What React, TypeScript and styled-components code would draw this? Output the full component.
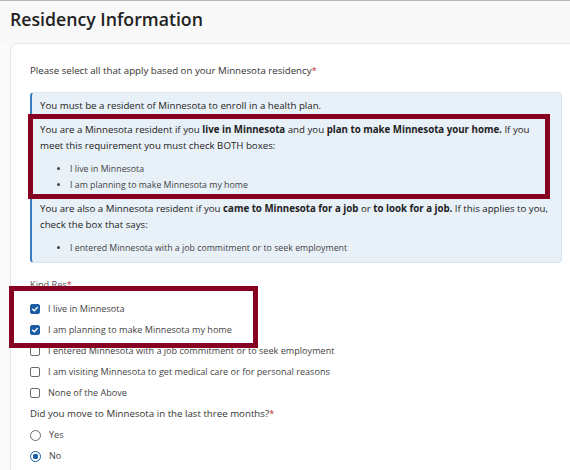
import React from 'react';
import styled, {createGlobalStyle} from 'styled-components';

const GlobalStyle = createGlobalStyle`
  html, body {
    margin: 0;
    background: #fafafa;
    font-family: "Open Sans", "Liberation Sans", sans-serif;
    color: #333;
    overflow: hidden;
  }
`

const kindOptions = [
    {text: 'I live in Minnesota', checked: true},
    {text: 'I am planning to make Minnesota my home', checked: true},
    {text: 'I entered Minnesota with a job commitment or to seek employment', checked: false},
    {text: 'I am visiting Minnesota to get medical care or for personal reasons', checked: false},
    {text: 'None of the Above', checked: false}
]

const CheckRow = ({text, checked}: {text: string, checked: boolean}) => (
    <OptionRow>
        <Checkbox $checked={checked}>
            {checked && (
                <svg width="8" height="8" viewBox="0 0 8 8">
                    <polyline points="1.6,4.2 3.3,5.8 6.4,2.4" fill="none" stroke="#fff" strokeWidth="1.4"
                              strokeLinecap="round" strokeLinejoin="round"/>
                </svg>
            )}
        </Checkbox>
        <span>{text}</span>
    </OptionRow>
)

const RadioRow = ({text, checked}: {text: string, checked: boolean}) => (
    <OptionRow>
        <Radio $checked={checked}/>
        <span>{text}</span>
    </OptionRow>
)

export default function App() {
    return (
        <>
            <GlobalStyle/>
            <Header>
                <Title>Residency Information</Title>
            </Header>
            <Card>
                <Prompt>Please select all that apply based on your Minnesota residency<Req>*</Req></Prompt>

                <InfoBox>
                    <p>You must be a resident of Minnesota to enroll in a health plan.</p>
                    <Highlight $inset="-8px 1px -6px -12px" $gap={8}>
                        <p>
                            You are a Minnesota resident if you <b>live in Minnesota</b> and you <b>plan to make
                            Minnesota your home.</b> If you meet this requirement you must check BOTH boxes:
                        </p>
                        <Bullets>
                            <li>I live in Minnesota</li>
                            <li>I am planning to make Minnesota my home</li>
                        </Bullets>
                    </Highlight>
                    <p>
                        You are also a Minnesota resident if you <b>came to Minnesota for a job</b> or <b>to look for
                        a job.</b> If this applies to you, check the box that says:
                    </p>
                    <Bullets>
                        <li>I entered Minnesota with a job commitment or to seek employment</li>
                    </Bullets>
                </InfoBox>

                <FieldLabel>Kind Res<Req>*</Req></FieldLabel>
                <OptionList $gap={6}>
                    <Highlight $inset="-13px -26px -7px -21px" $gap={0} $fit>
                        {kindOptions.slice(0, 2).map((o, i) => <CheckRow key={i} {...o}/>)}
                    </Highlight>
                    {kindOptions.slice(2).map((o, i) => <CheckRow key={i} {...o}/>)}
                </OptionList>

                <Question>Did you move to Minnesota in the last three months?<Req>*</Req></Question>
                <OptionList $gap={3}>
                    <RadioRow text="Yes" checked={false}/>
                    <RadioRow text="No" checked={true}/>
                </OptionList>
            </Card>
        </>
    );
}

const Header = styled.header`
  height: 42px;
  border-top: 1px solid #b5b5b5;
  background: #f8f8f8;
  padding-left: 10px;
  display: flex;
  align-items: center;
`

const Title = styled.h1`
  margin: 0 0 6px;
  font-size: 17.7px;
  font-weight: 600;
  color: #222;
`

const Card = styled.main`
  margin-left: 10px;
  background: #fff;
  border: 1px solid #e6e6e6;
  border-right: none;
  border-radius: 8px 0 0 0;
  padding: 19px 0 20px 19px;
  font-size: 9.7px;
  line-height: 16px;
`

const Req = styled.span`
  color: #c0343d;
`

const Prompt = styled.div`
  color: #333;
`

const InfoBox = styled.section`
  margin-top: 13px;
  width: 511px;
  background: #e8f0f8;
  border: 1px solid #d8e4f0;
  border-left: 2px solid #3b7cc0;
  border-radius: 4px;
  padding: 5px 10px 6px 8px;
  color: #222;

  p {
    margin: 8px 0 0;
  }

  & > p:first-child {
    margin-top: 0;
  }
`

const Highlight = styled.div<{$inset: string, $gap: number, $fit?: boolean}>`
  position: relative;
  width: ${p => p.$fit ? 'fit-content' : 'auto'};
  margin-top: ${p => p.$gap}px;

  & > p:first-child {
    margin-top: 0;
  }

  &::after {
    content: '';
    position: absolute;
    inset: ${p => p.$inset};
    border: 5px solid #870022;
    pointer-events: none;
  }
`

const Bullets = styled.ul`
  margin: 7px 0 0;
  padding-left: 30px;
  font-size: 8.8px;
  line-height: 15px;
  color: #444;

  li::marker {
    font-size: 8px;
  }
`

const FieldLabel = styled.div`
  margin-top: 14px;
  color: #555;
  font-size: 9.2px;
`

const OptionList = styled.div<{$gap: number}>`
  margin-top: ${p => p.$gap}px;
  display: flex;
  flex-direction: column;
`

const OptionRow = styled.label`
  display: flex;
  align-items: center;
  gap: 8px;
  height: 20.8px;
  font-size: 9.1px;
  color: #444;
`

const Checkbox = styled.span<{$checked: boolean}>`
  box-sizing: border-box;
  width: 10px;
  height: 10px;
  border-radius: 2px;
  border: 1px solid ${p => p.$checked ? '#1c5da4' : '#6a6a6a'};
  background: ${p => p.$checked ? '#1c5da4' : '#fff'};
  display: flex;
  align-items: center;
  justify-content: center;
`

const Radio = styled.span<{$checked: boolean}>`
  box-sizing: border-box;
  width: 11px;
  height: 11px;
  border-radius: 50%;
  border: 1.5px solid ${p => p.$checked ? '#1c5da4' : '#6a6a6a'};
  background: ${p => p.$checked ? 'radial-gradient(circle, #1c5da4 0 2.6px, #fff 3px)' : '#fff'};
`

const Question = styled.div`
  margin-top: 3px;
  color: #333;
`
